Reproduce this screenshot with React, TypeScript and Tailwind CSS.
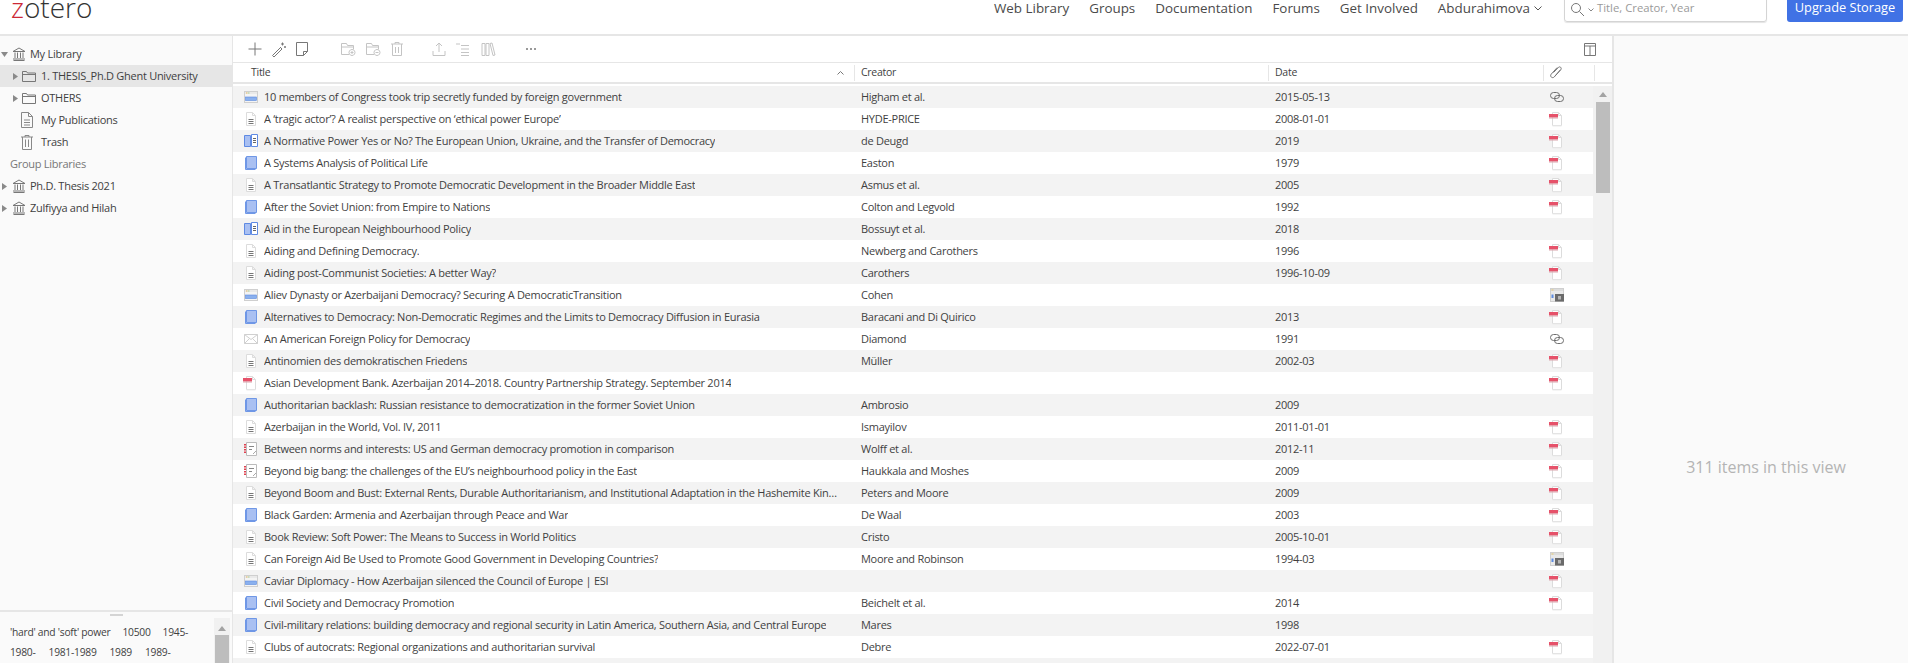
import React from 'react';

type ItemIcon = 'web' | 'doc' | 'book' | 'section' | 'letter' | 'pdf' | 'report';
type Attachment = 'pdf' | 'link' | 'snap' | null;

const rows: [ItemIcon, string, string, string, Attachment][] = [
  ['web', '10 members of Congress took trip secretly funded by foreign government', 'Higham et al.', '2015-05-13', 'link'],
  ['doc', 'A ‘tragic actor’? A realist perspective on ‘ethical power Europe’', 'HYDE-PRICE', '2008-01-01', 'pdf'],
  ['section', 'A Normative Power Yes or No? The European Union, Ukraine, and the Transfer of Democracy', 'de Deugd', '2019', 'pdf'],
  ['book', 'A Systems Analysis of Political Life', 'Easton', '1979', 'pdf'],
  ['doc', 'A Transatlantic Strategy to Promote Democratic Development in the Broader Middle East', 'Asmus et al.', '2005', 'pdf'],
  ['book', 'After the Soviet Union: from Empire to Nations', 'Colton and Legvold', '1992', 'pdf'],
  ['section', 'Aid in the European Neighbourhood Policy', 'Bossuyt et al.', '2018', null],
  ['doc', 'Aiding and Defining Democracy.', 'Newberg and Carothers', '1996', 'pdf'],
  ['doc', 'Aiding post-Communist Societies: A better Way?', 'Carothers', '1996-10-09', 'pdf'],
  ['web', 'Aliev Dynasty or Azerbaijani Democracy? Securing A DemocraticTransition', 'Cohen', '', 'snap'],
  ['book', 'Alternatives to Democracy: Non-Democratic Regimes and the Limits to Democracy Diffusion in Eurasia', 'Baracani and Di Quirico', '2013', 'pdf'],
  ['letter', 'An American Foreign Policy for Democracy', 'Diamond', '1991', 'link'],
  ['doc', 'Antinomien des demokratischen Friedens', 'Müller', '2002-03', 'pdf'],
  ['pdf', 'Asian Development Bank. Azerbaijan 2014–2018. Country Partnership Strategy. September 2014', '', '', 'pdf'],
  ['book', 'Authoritarian backlash: Russian resistance to democratization in the former Soviet Union', 'Ambrosio', '2009', null],
  ['doc', 'Azerbaijan in the World, Vol. IV, 2011', 'Ismayilov', '2011-01-01', 'pdf'],
  ['report', 'Between norms and interests: US and German democracy promotion in comparison', 'Wolff et al.', '2012-11', 'pdf'],
  ['report', 'Beyond big bang: the challenges of the EU’s neighbourhood policy in the East', 'Haukkala and Moshes', '2009', 'pdf'],
  ['doc', 'Beyond Boom and Bust: External Rents, Durable Authoritarianism, and Institutional Adaptation in the Hashemite Kingdom of Jordan', 'Peters and Moore', '2009', 'pdf'],
  ['book', 'Black Garden: Armenia and Azerbaijan through Peace and War', 'De Waal', '2003', 'pdf'],
  ['doc', 'Book Review: Soft Power: The Means to Success in World Politics', 'Cristo', '2005-10-01', 'pdf'],
  ['doc', 'Can Foreign Aid Be Used to Promote Good Government in Developing Countries?', 'Moore and Robinson', '1994-03', 'snap'],
  ['web', 'Caviar Diplomacy - How Azerbaijan silenced the Council of Europe | ESI', '', '', 'pdf'],
  ['book', 'Civil Society and Democracy Promotion', 'Beichelt et al.', '2014', 'pdf'],
  ['book', 'Civil-military relations: building democracy and regional security in Latin America, Southern Asia, and Central Europe', 'Mares', '1998', null],
  ['doc', 'Clubs of autocrats: Regional organizations and authoritarian survival', 'Debre', '2022-07-01', 'pdf'],
  ['doc', '', '', '', null],
];

function PageOutline() {
  return <path d="M3.5 1.5h6l3 3v10h-9z M9.500 1.500v3h3" fill="#fff" stroke="#dcdcdc" />;
}

function RowIcon({ type }: { type: ItemIcon }) {
  return (
    <svg width="16" height="16" viewBox="0 0 16 16" className="shrink-0">
      {type === 'web' && (
        <>
          <rect x="1.5" y="2.5" width="13" height="11" fill="#f4f4f4" stroke="#cfcfcf" />
          <rect x="2" y="3" width="12" height="2" fill="#e9e9e9" />
          <rect x="3" y="3.5" width="1.5" height="1" fill="#e8b75f" />
          <rect x="5" y="3.5" width="1.5" height="1" fill="#a7cf8f" />
          <rect x="2.5" y="8" width="11" height="3.5" fill="#8ab0ee" stroke="#5c8be0" strokeWidth="0.6" />
        </>
      )}
      {type === 'doc' && (
        <>
          <PageOutline />
          <path d="M5.5 8.5h5M5.500 10.500h5M5.500 12.500h5" stroke="#777" />
        </>
      )}
      {type === 'book' && (
        <>
          <path d="M3.5 1.5h10v12h-10z" fill="#a9c0f2" stroke="#6f97e6" />
          <path d="M2.500 2.500v12h10" fill="none" stroke="#6f97e6" />
        </>
      )}
      {type === 'section' && (
        <>
          <path d="M1.500 2.500h6v11h-6z" fill="#a9c0f2" stroke="#5f8ae3" />
          <path d="M8.500 1.500h6v12h-6z" fill="#fff" stroke="#5f8ae3" />
          <path d="M10 5.500h3M10 7.500h3M10 9.500h3" stroke="#666" />
        </>
      )}
      {type === 'letter' && (
        <path d="M1.500 3.500h13v9h-13z M1.500 3.500l6.500 5 6.500-5 M1.500 12.500l5-5 M14.500 12.500l-5-5" fill="#fff" stroke="#d0d0d0" />
      )}
      {type === 'pdf' && <PdfMark />}
      {type === 'report' && (
        <>
          <path d="M3.500 1.500h10v13h-10z" fill="#fff" stroke="#bbb" />
          <path d="M2 3v10" stroke="#e0404f" strokeWidth="2" strokeDasharray="1.500 1" />
          <path d="M6 5.500h5M6 8.500h3" stroke="#888" />
          <path d="M10 13l3-3" stroke="#aaa" />
        </>
      )}
    </svg>
  );
}

function PdfMark() {
  return (
    <>
      <PageOutline />
      <path d="M3.500 15h9" stroke="#ececec" />
      <rect x="0" y="3" width="9" height="3.500" fill="#e6526a" />
      <rect x="0" y="6.500" width="9" height="1" fill="#d9a3ab" />
    </>
  );
}

function AttachIcon({ type }: { type: Attachment }) {
  if (!type) return null;
  return (
    <svg width="16" height="16" viewBox="0 0 16 16">
      {type === 'pdf' && <PdfMark />}
      {type === 'link' && (
        <g fill="none" stroke="#6e6e6e">
          <rect x="1.500" y="3.500" width="9" height="6" rx="3" />
          <rect x="5.500" y="6.500" width="9" height="6" rx="3" />
        </g>
      )}
      {type === 'snap' && (
        <>
          <rect x="1.500" y="1.500" width="13" height="13" fill="#e9e9e9" stroke="#cfcfcf" />
          <rect x="2" y="2" width="12" height="2" fill="#dcdcdc" />
          <rect x="2.500" y="2.500" width="2" height="1" fill="#e8c96f" />
          <rect x="2.500" y="7.500" width="2" height="3.500" fill="#5c8be0" />
          <rect x="6" y="7" width="9" height="7.500" fill="#6a6a6a" />
          <rect x="9" y="9" width="3" height="3.500" fill="#b5b5b5" />
        </>
      )}
    </svg>
  );
}

function Twisty({ open }: { open?: boolean }) {
  return (
    <svg width="7" height="7" viewBox="0 0 7 7" className="shrink-0">
      <path d={open ? 'M0 1h7L3.500 6z' : 'M1 0l5 3.500L1 7z'} fill="#8a8a8a" />
    </svg>
  );
}

function LibraryIcon() {
  return (
    <svg width="14" height="16" viewBox="0 0 14 16" fill="none" stroke="#777" className="shrink-0">
      <path d="M1 5.500L7 2l6 3.500z M1.500 14.500h11 M1 13h12 M3 6.500V12 M5.500 6.500V12 M8.500 6.500V12 M11 6.500V12" />
    </svg>
  );
}

function FolderIcon() {
  return (
    <svg width="14" height="14" viewBox="0 0 14 14" fill="none" stroke="#777" className="shrink-0">
      <path d="M.5 12.500v-10h4l1 1.500h8v8.500z M.5 5.500h13" />
    </svg>
  );
}

function SideRow({ children, className }: { children: React.ReactNode; className: string }) {
  return <div className={`flex h-[22px] items-center whitespace-nowrap ${className}`}>{children}</div>;
}

function ToolIcon({ d, dim, className }: { d: string; dim?: boolean; className: string }) {
  return (
    <svg width="16" height="16" viewBox="0 0 16 16" fill="none" stroke={dim ? '#c4c4c4' : '#777'} className={`shrink-0 ${className}`}>
      <path d={d} />
    </svg>
  );
}

export default function App() {
  return (
    <div className="flex h-screen w-full flex-col overflow-hidden bg-white text-[11px] tracking-[-0.27px] text-[#3f3f3f] [font-family:'Open_Sans',sans-serif]">
      <header className="flex h-[36px] shrink-0 items-start overflow-hidden border-b-2 border-[#e6e6e6] pl-[11px] tracking-normal">
        <div className="-mt-[13px] text-[28px] leading-[40px] font-light text-[#333]">
          <span className="text-[#cc2936]">z</span>otero
        </div>
        <nav className="ml-auto flex h-[17px] items-center gap-[20px] text-[13.4px] text-[#4a4a4a]">
          <span>Web Library</span>
          <span>Groups</span>
          <span>Documentation</span>
          <span>Forums</span>
          <span>Get Involved</span>
          <span className="flex items-center gap-[4px]">
            Abdurahimova
            <svg width="8" height="5" viewBox="0 0 8 5" fill="none" stroke="#555"><path d="M.5.5L4 4 7.500.5" /></svg>
          </span>
        </nav>
        <div className="ml-[22px] -mt-[10px] flex h-[32px] w-[203px] items-end gap-[3px] rounded-[3px] border border-[#d4d4d4] pb-[4px] pl-[5px] text-[11.3px] text-[#9a9a9a] shadow-[0_1px_1px_#e4e4e4]">
          <svg width="15" height="15" viewBox="0 0 15 15" fill="none" stroke="#777"><circle cx="6" cy="6" r="4.500" /><path d="M9.500 9.500l4.500 4.500" /></svg>
          <svg width="6" height="4" viewBox="0 0 6 4" fill="none" stroke="#888" className="mb-[5px]"><path d="M.5.5L3 3 5.500.5" /></svg>
          <span>Title, Creator, Year</span>
        </div>
        <div className="mr-[5px] ml-[20px] -mt-[10px] flex h-[32px] w-[116px] items-end justify-center rounded-[3px] bg-[#4072e5] pb-[5px] text-[12.8px] text-white">
          Upgrade Storage
        </div>
      </header>

      <div className="flex min-h-0 flex-1">
        <aside className="flex w-[233px] shrink-0 flex-col border-r border-[#e6e6e6] bg-[#fafafa]">
          <div className="flex-1 pt-[7px]">
            <SideRow className="gap-[4px] pl-[1px]"><Twisty open /><LibraryIcon /><span>My Library</span></SideRow>
            <SideRow className="gap-[3px] bg-[#e6e6e6] pl-[12px]"><Twisty /><FolderIcon /><span className="ml-[2px]">1. THESIS_Ph.D Ghent University</span></SideRow>
            <SideRow className="gap-[3px] pl-[12px]"><Twisty /><FolderIcon /><span className="ml-[2px]">OTHERS</span></SideRow>
            <SideRow className="gap-[7px] pl-[20px]">
              <svg width="14" height="16" viewBox="0 0 14 16" fill="none" stroke="#888"><path d="M1.500.5h7l4 4v11h-11z M8.500.5v4h4 M4 8h6M4 10.500h6M4 13h6" /></svg>
              <span>My Publications</span>
            </SideRow>
            <SideRow className="gap-[7px] pl-[20px]">
              <svg width="14" height="16" viewBox="0 0 14 16" fill="none" stroke="#888"><path d="M1 3h12 M5 3V1.500h4V3 M2.500 3v12.500h9V3 M5.500 5.500v7.500 M8.500 5.500v7.500" /></svg>
              <span>Trash</span>
            </SideRow>
            <SideRow className="pl-[10px] text-[#777]">Group Libraries</SideRow>
            <SideRow className="gap-[4px] pl-[1px]"><Twisty /><LibraryIcon /><span>Ph.D. Thesis 2021</span></SideRow>
            <SideRow className="gap-[4px] pl-[1px]"><Twisty /><LibraryIcon /><span>Zulfiyya and Hilah</span></SideRow>
          </div>
          <div className="flex h-[53px] shrink-0 flex-col border-t-2 border-[#e6e6e6]">
            <div className="flex h-[6px] shrink-0 justify-center pt-[2px]"><div className="h-[2px] w-[13px] bg-[#d4d4d4]" /></div>
            <div className="flex min-h-0 flex-1">
              <div className="flex-1 pl-[10px] text-[10.3px]">
                <div className="flex h-[22px] items-center pt-[8px]">
                  <span>'hard' and 'soft' power</span>
                  <span className="ml-[12px]">10500</span>
                  <span className="ml-[12px]">1945-</span>
                </div>
                <div className="-mt-[2px] flex h-[22px] items-center gap-[13px] pt-[8px]">
                  <span>1980-</span>
                  <span>1981-1989</span>
                  <span>1989</span>
                  <span>1989-</span>
                </div>
              </div>
              <div className="mr-[2px] flex w-[16px] flex-col items-center bg-[#f1f1f1] pt-[8px]">
                <svg width="8" height="5" viewBox="0 0 8 5" className="shrink-0"><path d="M0 5l4-5 4 5z" fill="#a3a3a3" /></svg>
                <div className="mt-[4px] w-[14px] flex-1 bg-[#bdbdbd]" />
              </div>
            </div>
          </div>
        </aside>

        <main className="flex min-w-0 w-[1379px] shrink-0 flex-col">
          <div className="flex h-[27px] shrink-0 items-center border-b border-[#e6e6e6] pl-[14px]">
            <ToolIcon d="M8 1.500v13M1.500 8h13" className="" />
            <ToolIcon d="M1.500 14.500l8-8 1.500 1.500-8 8z M2 14l8-8M11.500 1.500v3M10 3h3M14 5v2M13 6h2" className="ml-[8px]" />
            <ToolIcon d="M2.500 1.500h11v9l-4 4h-7z M9.500 14.500v-4h4" className="ml-[7px]" />
            <ToolIcon dim d="M1.500 13.500v-11h5l1 2h6v4 M9 13.500H1.500 M1.500 6h12 M12 8.500a3 3 0 1 1-.01 0z M12 10v3M10.500 11.500h3" className="ml-[30px]" />
            <ToolIcon dim d="M1.500 13.500v-11h5l1 2h6v4 M9 13.500H1.500 M1.500 6h12 M12 8.500a3 3 0 1 1-.01 0z M10.500 11.500h3" className="ml-[9px]" />
            <ToolIcon dim d="M2 3h12 M6 3V1.500h4V3 M3.500 3v11.500h9V3 M6.500 6v6 M9.500 6v6" className="ml-[8px]" />
            <ToolIcon dim d="M8 11V2 M5 5l3-3 3 3 M2 10v4.500h12V10" className="ml-[26px]" />
            <ToolIcon dim d="M2 2v2 M4 2v2 M6 4.500h8 M6 8h8 M6 11.500h8 M6 14.500h8" className="ml-[8px]" />
            <ToolIcon dim d="M2 2.500h3v12H2z M6 2.500h3v12H6z M10 2.500l2-.5 3 12-2 .5z" className="ml-[9px]" />
            <svg width="16" height="16" viewBox="0 0 16 16" fill="#777" className="ml-[27px]"><circle cx="4" cy="8" r="1" /><circle cx="8" cy="8" r="1" /><circle cx="12" cy="8" r="1" /></svg>
            <ToolIcon d="M2.500 2.500h11v12h-11z M2.500 5h11 M8 5v9.500" className="ml-[1043px]" />
          </div>

          <div className="flex h-[21px] shrink-0 items-center border-b-2 border-[#e6e6e6] text-[10.5px]">
            <div className="flex h-full w-[621px] shrink-0 items-center pr-[10px] pl-[18px]">
              <span>Title</span>
              <svg width="7" height="4" viewBox="0 0 7 4" fill="none" stroke="#777" className="ml-auto"><path d="M.5 3.500l3-3 3 3" /></svg>
            </div>
            <div className="flex h-[16px] w-[414px] shrink-0 items-center border-l border-[#e6e6e6] pl-[6px]">Creator</div>
            <div className="flex h-[16px] w-[275px] shrink-0 items-center border-l border-[#e6e6e6] pl-[6px]">Date</div>
            <div className="flex h-[16px] w-[51px] shrink-0 items-center border-l border-[#e6e6e6] pl-[5px]">
              <svg width="16" height="16" viewBox="0 0 16 16" fill="none" stroke="#777"><path d="M4.500 7.500l5-5.200c1.300-1.300 3.700.6 2.300 2.300l-6.600 7.400c-1.800 1.800-4.800-.5-3-2.800l6-6.700 M6 11l5.500-6.200" /></svg>
            </div>
            <div className="h-[16px] border-l border-[#e6e6e6]" />
          </div>

          <div className="flex min-h-0 flex-1 pt-[2px]">
            <div className="w-[1360px] shrink-0">
              {rows.map(([icon, title, creator, date, attach], i) => (
                <div key={i} className={`flex h-[22px] items-center ${i % 2 === 0 ? 'bg-[#f3f3f3]' : 'bg-white'}`}>
                  <div className="flex w-[621px] shrink-0 items-center gap-[5px] pr-[16px] pl-[10px]">
                    {title && <RowIcon type={icon} />}
                    <span className="truncate">{title}</span>
                  </div>
                  <div className="w-[414px] shrink-0 truncate pl-[7px]">{creator}</div>
                  <div className="w-[275px] shrink-0 pl-[7px]">{date}</div>
                  <div className="flex w-[50px] shrink-0 pl-[6px]"><AttachIcon type={attach} /></div>
                </div>
              ))}
            </div>
            <div className="flex w-[19px] shrink-0 flex-col items-center bg-[#f1f1f1] pt-[6px]">
              <svg width="8" height="5" viewBox="0 0 8 5" className="shrink-0"><path d="M0 5l4-5 4 5z" fill="#a3a3a3" /></svg>
              <div className="mt-[5px] h-[91px] w-[14px] bg-[#bdbdbd]" />
            </div>
          </div>
        </main>

        <section className="flex min-w-0 flex-1 items-center justify-center border-l-2 border-[#e6e6e6] bg-[#fafafa] pt-[234px] pl-[10px] text-[16px] tracking-normal text-[#b4b4b4]">
          311 items in this view
        </section>
      </div>
    </div>
  );
}
